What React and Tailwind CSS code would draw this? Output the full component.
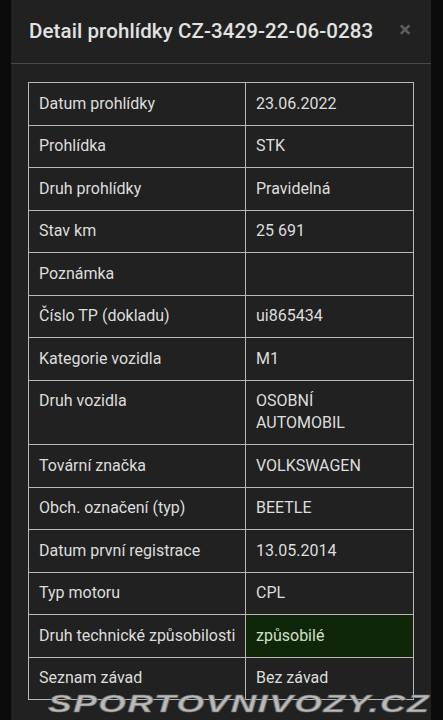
import React from 'react';

const rows = [
  ['Datum prohlídky', '23.06.2022'],
  ['Prohlídka', 'STK'],
  ['Druh prohlídky', 'Pravidelná'],
  ['Stav km', '25 691'],
  ['Poznámka', ''],
  ['Číslo TP (dokladu)', 'ui865434'],
  ['Kategorie vozidla', 'M1'],
  ['Druh vozidla', 'OSOBNÍ AUTOMOBIL'],
  ['Tovární značka', 'VOLKSWAGEN'],
  ['Obch. označení (typ)', 'BEETLE'],
  ['Datum první registrace', '13.05.2014'],
  ['Typ motoru', 'CPL'],
  ['Druh technické způsobilosti', 'způsobilé', true],
  ['Seznam závad', 'Bez závad'],
];

const App = () => {
  return (
    <div
      className="relative h-[720px] overflow-hidden bg-[#0b0b0b] text-[#dddddd]"
      style={{ fontFamily: 'Roboto, "Noto Sans", sans-serif' }}
    >
      <div className="ml-[11px] h-full w-[420px] bg-[#212121]">
        <div className="flex h-[64px] items-center justify-between border-b border-[#4a4a4a] pl-[18px] pr-[20px]">
          <h1 className="text-[20.5px] font-medium tracking-[0.1px] text-[#e2e2e2]">
            Detail prohlídky CZ-3429-22-06-0283
          </h1>
          <span className="mb-[3px] text-[22px] font-bold leading-none text-[#5e5e5e]">×</span>
        </div>

        <div className="px-[17px] pt-[18px]">
          <table className="w-[386px] table-fixed border-collapse text-[16px] leading-[22px]">
            <colgroup>
              <col className="w-[217px]" />
              <col />
            </colgroup>
            <tbody>
              {rows.map(([label, value, ok]) => (
                <tr key={label}>
                  <td className="whitespace-nowrap border border-[#b8b8b8] px-[10px] py-[9.75px] align-top">{label}</td>
                  <td
                    className={`border border-[#b8b8b8] px-[10px] py-[9.75px] align-top ${
                      ok ? 'bg-[#0f2608] text-[#cfe0c8]' : ''
                    }`}
                  >
                    {value === 'OSOBNÍ AUTOMOBIL' ? (
                      <>
                        OSOBNÍ
                        <br />
                        AUTOMOBIL
                      </>
                    ) : (
                      value
                    )}
                  </td>
                </tr>
              ))}
            </tbody>
          </table>
        </div>
      </div>

      <div
        className="absolute left-[48px] top-[693px] origin-left scale-x-[1.54] text-[23px] font-black italic leading-none tracking-[1px] text-[#b9b9b9]"
        style={{ fontFamily: '"Liberation Sans", Arial, sans-serif', WebkitTextStroke: '0.6px #6a6a6a' }}
      >
        SPORTOVNIVOZY.CZ
      </div>
    </div>
  );
};

export default App;
